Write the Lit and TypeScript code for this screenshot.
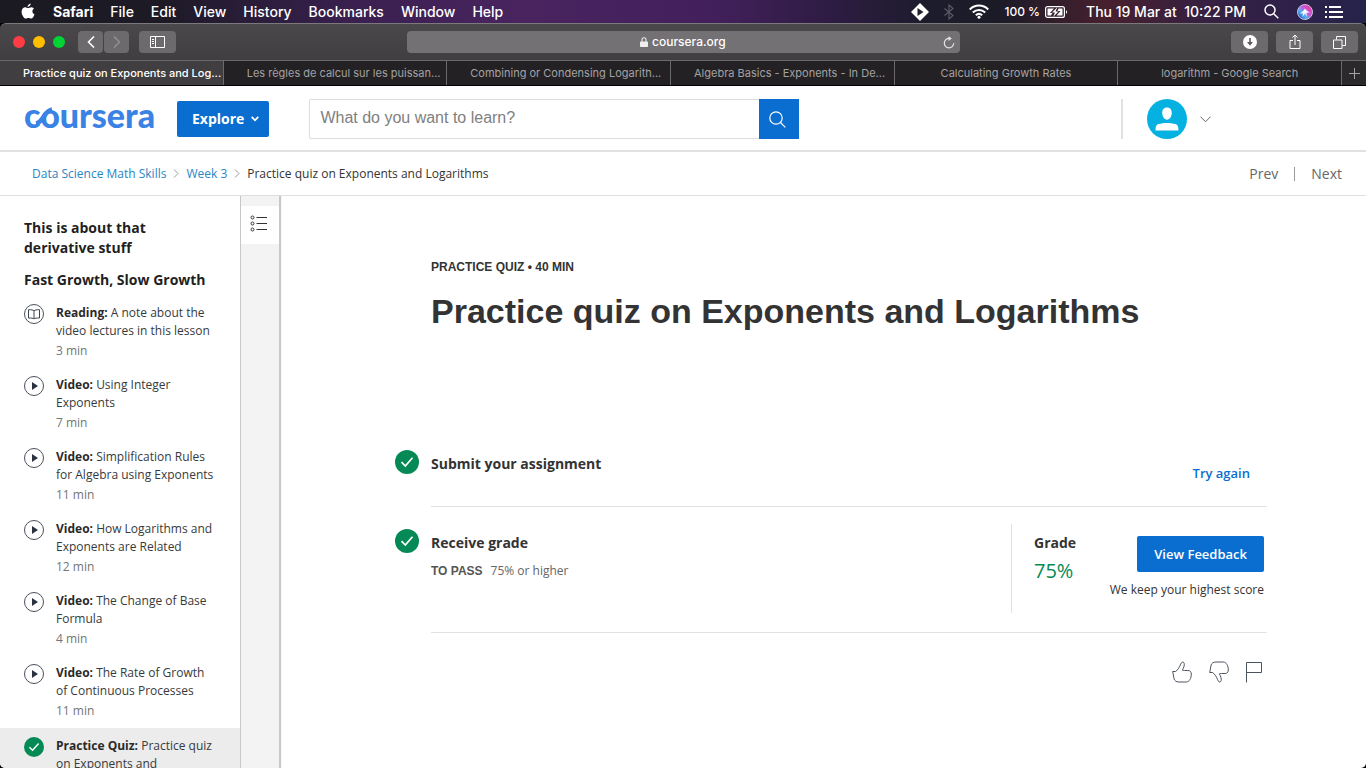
import { LitElement, html, css, svg } from "lit";
import { customElement, property } from "lit/decorators.js";
import { classMap } from "lit/directives/class-map.js";

type Kind = "reading" | "video" | "done";

interface Lesson {
  kind: Kind;
  type: string;
  title: string;
  time: string;
}

const MENUS = ["File", "Edit", "View", "History", "Bookmarks", "Window", "Help"];

const TABS = [
  { title: "Practice quiz on Exponents and Log...", clipped: true, active: true },
  { title: "Les règles de calcul sur les puissan...", clipped: true },
  { title: "Combining or Condensing Logarith...", clipped: true },
  { title: "Algebra Basics - Exponents - In De...", clipped: true },
  { title: "Calculating Growth Rates" },
  { title: "logarithm - Google Search" },
];

const LESSONS: Lesson[] = [
  { kind: "reading", type: "Reading:", title: "A note about the video lectures in this lesson", time: "3 min" },
  { kind: "video", type: "Video:", title: "Using Integer Exponents", time: "7 min" },
  { kind: "video", type: "Video:", title: "Simplification Rules for Algebra using Exponents", time: "11 min" },
  { kind: "video", type: "Video:", title: "How Logarithms and Exponents are Related", time: "12 min" },
  { kind: "video", type: "Video:", title: "The Change of Base Formula", time: "4 min" },
  { kind: "video", type: "Video:", title: "The Rate of Growth of Continuous Processes", time: "11 min" },
  { kind: "done", type: "Practice Quiz:", title: "Practice quiz on Exponents and", time: "" },
];

const checkIcon = (size: number) => html`<svg width=${size} height=${size} viewBox="0 0 24 24" aria-hidden="true">
  <circle cx="12" cy="12" r="12" fill="#058a56" />
  <path d="M6.500 12.200 10.300 16 17.500 7.800" fill="none" stroke="#fff" stroke-width="1.700" />
</svg>`;

const lessonIcon = (kind: Kind) => {
  if (kind === "done") return checkIcon(20);
  const inner =
    kind === "video"
      ? svg`<path d="M8 6v8l6-4z" fill="#2b3340" />`
      : svg`<path d="M10 6.800C9 5.900 7.500 5.700 4.500 5.700v8.300c3 0 4.500.1 5.500.9 1-.8 2.500-.9 5.500-.9V5.700c-3 0-4.500.2-5.500 1.100zV14.600" fill="none" stroke="#3d4450" />`;
  return html`<svg width="20" height="20" viewBox="0 0 20 20" aria-hidden="true">
    <circle cx="10" cy="10" r="9.500" fill="#fff" stroke="#4a505c" />${inner}
  </svg>`;
};

@customElement("lesson-link")
export class LessonLink extends LitElement {
  @property({ attribute: false }) lesson!: Lesson;

  static styles = css`
    :host { display: block; }
    .link { display: flex; gap: 12px; padding: 8px 24px; color: #373a3c; text-decoration: none;
      font: 12px/18px "Open Sans", sans-serif; }
    .link svg { flex: none; display: block; }
    .current { padding-top: 9px; background: #ececec; }
    .text { display: flex; flex-direction: column; gap: 2px; }
    .type { font-weight: 700; color: #2a2a2a; }
    .time { color: #757575; }
  `;

  render() {
    const { kind, type, title, time } = this.lesson;
    return html`<a href="#" class=${classMap({ link: true, current: kind === "done" })}>
      ${lessonIcon(kind)}
      <span class="text">
        <span><span class="type">${type}</span> ${title}</span>
        <span class="time">${time}</span>
      </span>
    </a>`;
  }
}

@customElement("mac-menubar")
export class MacMenubar extends LitElement {
  static styles = css`
    :host { display: flex; flex: none; align-items: center; justify-content: space-between; height: 23px;
      padding: 0 23px 0 20px; color: #fff; font: 500 14px/20px Inter, sans-serif;
      background: linear-gradient(90deg, #1b1a21 0%, #1d1a26 12%, #3a2050 26%, #49245f 38%, #43205c 52%, #301c45 60%, #1c1c2c 68%, #1b1b28 73%, #47202d 81%, #39203f 87%, #2f2149 94%, #25234a 100%); }
    .menus, .status, .icons, .corner { display: flex; align-items: center; }
    .menus { gap: 17px; }
    .status { gap: 18px; }
    .icons { gap: 15px; }
    .corner { gap: 12px; }
    .menu { all: unset; cursor: default; }
    .app { font-weight: 700; }
    .battery { display: flex; align-items: center; gap: 5px; font-size: 12px; }
    .clock { white-space: pre; }
    svg { display: block; }
  `;

  render() {
    return html`
      <nav class="menus" aria-label="Menus">
        <svg width="16" height="17" viewBox="0 0 16 17" fill="#fff">
          <path d="M10.700 0.500c.1 1.700-1.500 3.500-3.100 3.400C7.500 2.200 9 .7 10.700.5zM14 5.600c-2.400 1.500-1.900 4.800.5 5.800-.6 1.700-1.900 4.100-3.300 4.100-1 0-1.400-.6-2.700-.6s-1.700.6-2.600.6C4 15.600 1.600 12 1.600 8.700c0-2.800 1.800-4.400 3.600-4.400 1.300 0 2.200.8 3.100.8.800 0 1.800-.9 3.400-.8 1 .1 1.800.5 2.300 1.300z" />
        </svg>
        <button class="menu app">Safari</button>
        ${MENUS.map((m) => html`<button class="menu">${m}</button>`)}
      </nav>
      <div class="status">
        <div class="icons">
          <svg width="18" height="18" viewBox="0 0 18 18"><path d="M9 0l9 9-9 9-9-9z" fill="#fff" /><path d="M6.500 5v8l6-4z" fill="#231f2b" /></svg>
          <svg width="10" height="16" viewBox="0 0 10 16" fill="none" stroke="#5b5a66" stroke-width="1.200"><path d="M.5 4.500l8.500 7L5 15V1l4 3.500-8.500 7" /></svg>
          <svg width="20" height="15" viewBox="0 0 20 15" fill="none" stroke="#fff" stroke-width="2"><path d="M.8 5.500c5.200-5.200 13.200-5.200 18.400 0M3.800 8.500c3.600-3.500 8.800-3.500 12.400 0M6.800 11.300c2-1.800 4.400-1.800 6.400 0" /><circle cx="10" cy="13.300" r="1.500" fill="#fff" stroke="none" /></svg>
          <span class="battery">100 %
            <svg width="23" height="12" viewBox="0 0 23 12"><rect x=".6" y=".6" width="18.800" height="10.800" rx="2" fill="none" stroke="#fff" stroke-width="1.200" /><path d="M2.500 2.500H9L5 7h2.500L6 9.500H2.500zM13.500 2.500h4v7h-6L15.500 5H12.500z" fill="#fff" /><path d="M12.500 1L7 6.500h3L8 11l5.500-5.500h-3z" fill="#fff" /><path d="M21 4.300v3.400c1.500-.5 1.500-2.900 0-3.400z" fill="#fff" /></svg>
          </span>
        </div>
        <span class="clock">Thu 19 Mar at  10:22 PM</span>
        <svg width="15" height="15" viewBox="0 0 15 15" fill="none" stroke="#fff" stroke-width="1.500"><circle cx="6" cy="6" r="5" /><path d="M9.700 9.700 14.300 14.300" /></svg>
        <div class="corner">
          <svg width="16" height="16" viewBox="0 0 16 16">
            <defs><linearGradient id="orb" x1="0.1" y1="0.9" x2="0.9" y2="0.2"><stop offset="0" stop-color="#1d48d8" /><stop offset=".35" stop-color="#4fb4ee" /><stop offset=".6" stop-color="#c05be0" /><stop offset="1" stop-color="#e93a9c" /></linearGradient></defs>
            <circle cx="8" cy="8" r="7.500" fill="url(#orb)" stroke="#c9c4dd" />
            <path d="M2.500 9.500C5 8.500 6.500 6.500 8 4.500c1.500 2 3 3.500 5.500 4L9.500 8.800 10 13 8 9.500 5.500 13l.5-3.800z" fill="#f4f4ff" />
          </svg>
          <svg width="18" height="12" viewBox="0 0 18 12" fill="#fff"><path d="M0 0h2v2H0zM4 0h12v2H4zM0 5h2v2H0zM4 5h14v2H4zM0 10h2v2H0zM4 10h14v2H4z" /></svg>
        </div>
      </div>`;
  }
}

@customElement("safari-chrome")
export class SafariChrome extends LitElement {
  static styles = css`
    :host { display: block; flex: none; font-family: Inter, sans-serif; border-top: 1px solid #7b797b;
      border-bottom: 1px solid #000; border-radius: 6px 6px 0 0; background: linear-gradient(#4a484a, #403e40 36px); overflow: hidden; }
    .bar { display: grid; grid-template-columns: 1fr minmax(0, 553px) 1fr; align-items: center; height: 36px; padding: 0 8px; }
    .side { display: flex; align-items: center; }
    .right { justify-content: flex-end; gap: 8px; }
    .lights { display: flex; gap: 8px; margin: 0 13px 0 5px; }
    .light { width: 12px; height: 12px; border-radius: 50%; background: #ff3b43; }
    .min { background: #ffbe00; }
    .max { background: #00d435; }
    .btn { display: grid; place-items: center; width: 37px; height: 22px; padding: 0; border: 0; border-radius: 4px;
      background: #6c6a6c; color: #fff; }
    .nav { width: 25px; margin-right: 1px; }
    .off { color: #969496; }
    .panel { margin-left: 9px; }
    .address { display: flex; align-items: center; height: 22px; padding: 0 5px 0 17px; border-radius: 4px; background: #737173; }
    .site { flex: 1; display: flex; align-items: center; justify-content: center; gap: 4px; }
    .url { width: 74px; padding: 0; border: 0; background: none; color: #fff; font: 500 12px/16px Inter, sans-serif; }
    .reload { all: unset; color: #e5e5e5; }
    .tabs { display: grid; grid-template-columns: repeat(6, minmax(0, 1fr)) 24px; height: 24px; border-top: 1px solid #6b696b; }
    .tab { all: unset; box-sizing: border-box; display: flex; align-items: center; justify-content: center; height: 24px;
      border-right: 1px solid #6b696b; background: #232123; color: #a3a1a3; font-size: 11px; line-height: 16px; white-space: nowrap; overflow: hidden; }
    .clipped { justify-content: flex-start; padding-left: 23px; }
    .active { background: none; color: #fff; font-weight: 500; }
    .add { all: unset; display: grid; place-items: center; background: #2b292b; color: #a3a1a3; }
    svg { display: block; }
  `;

  render() {
    return html`
      <div class="bar">
        <div class="side">
          <div class="lights"><span class="light"></span><span class="light min"></span><span class="light max"></span></div>
          <button class="btn nav" aria-label="Back"><svg width="8" height="12" viewBox="0 0 8 12" fill="none" stroke="currentColor" stroke-width="1.600"><path d="M7 .5 1.500 6 7 11.500" /></svg></button>
          <button class="btn nav off" aria-label="Forward"><svg width="8" height="12" viewBox="0 0 8 12" fill="none" stroke="currentColor" stroke-width="1.300"><path d="M1 .5 6.500 6 1 11.500" /></svg></button>
          <button class="btn panel" aria-label="Sidebar"><svg width="15" height="12" viewBox="0 0 15 12" fill="none" stroke="currentColor"><path d="M.5.5h14v11H.5zM5.500.5v11M2 3.500h2M2 5.500h2M2 7.500h2" /></svg></button>
        </div>
        <div class="address">
          <div class="site">
            <svg width="8" height="10" viewBox="0 0 8 10"><path d="M2 5V2.800a2 2 0 0 1 4 0V5" fill="none" stroke="#eee" stroke-width="1.100" /><rect y="4.500" width="8" height="5.500" rx=".8" fill="#eee" /></svg>
            <input class="url" aria-label="Address" value="coursera.org" />
          </div>
          <button class="reload" aria-label="Reload"><svg width="12" height="13" viewBox="0 0 12 13" fill="none" stroke="currentColor" stroke-width="1.200"><path d="M6.500 2.500A4.700 4.700 0 1 0 10.700 7.200" /><path d="M5.500.2 8.800 2.600 5.500 5z" fill="currentColor" stroke="none" /></svg></button>
        </div>
        <div class="side right">
          <button class="btn" aria-label="Downloads"><svg width="14" height="14" viewBox="0 0 14 14"><circle cx="7" cy="7" r="7" fill="#fff" /><path d="M6.200 3h1.600v4h2.200L7 10.800 4 7h2.200z" fill="#5c5a5c" /></svg></button>
          <button class="btn" aria-label="Share"><svg width="12" height="16" viewBox="0 0 12 16" fill="none" stroke="currentColor"><path d="M4 6.500H1v8h10v-8H8M6 11V1M3.500 3.500 6 1l2.500 2.500" /></svg></button>
          <button class="btn" aria-label="Show tabs"><svg width="13" height="13" viewBox="0 0 13 13" fill="none" stroke="currentColor"><path d="M.5 4h8.500v8.500H.5zM3.500 3.500V.5h9v9H9.500" /></svg></button>
        </div>
      </div>
      <div class="tabs">
        ${TABS.map((t) => html`<button class=${classMap({ tab: true, clipped: !!t.clipped, active: !!t.active })}>${t.title}</button>`)}
        <button class="add" aria-label="New tab"><svg width="11" height="11" viewBox="0 0 11 11" stroke="currentColor"><path d="M5.500 0v11M0 5.500h11" /></svg></button>
      </div>`;
  }
}

@customElement("app-root")
export class AppRoot extends LitElement {
  static styles = css`
    :host { display: flex; flex-direction: column; height: 100vh; overflow: hidden; background: #000; color: #333;
      font-family: "Open Sans", sans-serif; }
    * { box-sizing: border-box; }
    svg { display: block; flex: none; }
    a { text-decoration: none; color: inherit; }
    .page { flex: 1; min-height: 0; display: flex; flex-direction: column; background: #fff; border-radius: 0 0 5px 5px; overflow: hidden; }

    .header { flex: none; display: flex; align-items: center; height: 66px; padding: 2px 155px 0 24px; border-bottom: 2px solid #e1e1e1; }
    .logo { position: relative; width: 129px; margin-right: 24px; padding-bottom: 8px; color: #3a82e4; font: 900 34px/32px Lato, sans-serif; }
    .loop { position: absolute; left: 0; top: 0; }
    .explore { display: flex; align-items: center; gap: 7px; height: 36px; padding: 0 10px 0 15px; border: 0; border-radius: 2px;
      background: #0a6ed1; color: #fff; font: 700 14px/20px "Open Sans", sans-serif; margin-right: 40px; }
    .search { display: flex; flex: 0 1 490px; height: 40px; }
    .query { flex: 1; min-width: 0; padding: 0 10px 2px; border: 1px solid #dedede; border-right: 0; border-radius: 2px 0 0 2px;
      color: #333; font: 16px/20px "Liberation Sans", sans-serif; }
    .query::placeholder { color: #808080; opacity: 1; }
    .go { display: grid; place-items: center; width: 40px; padding: 0 4px 0 0; border: 0; background: #0a6ed1; }
    .account { display: flex; align-items: center; gap: 13px; height: 40px; margin-left: auto; padding: 0 0 0 24px;
      border: 0; border-left: 2px solid #e1e1e1; background: none; }

    .crumbs { flex: none; display: flex; align-items: center; justify-content: space-between; height: 44px; padding: 0 24px 0 32px;
      border-bottom: 1px solid #e1e1e1; font-size: 12px; line-height: 18px; }
    .trail, .pager { display: flex; align-items: center; }
    .trail { gap: 7px; }
    .trail a { color: #2a85c4; }
    .pager { gap: 16px; font-size: 14px; color: #666; }
    .pager a + a { display: flex; align-items: center; gap: 16px; }
    .pager a + a::before { content: ""; width: 1px; height: 14px; background: #999; }

    .body { flex: 1; min-height: 0; display: flex; }
    .lessons { flex: none; width: 240px; overflow: hidden; padding-top: 22px; }
    .lessons h2 { margin: 0 24px 12px; font-size: 14px; line-height: 20px; color: #1f1f1f; }
    .lessons h2 + h2 { margin-bottom: 6px; }
    .rail { flex: none; width: 39px; padding: 10px 0 0; border-left: 1px solid #c7c7c7; background: #f3f3f3;
      box-shadow: 2px 0 1px #c8c8c8; }
    .outline { display: grid; place-items: center; width: 100%; height: 38px; padding: 0 2px 2px 0; border: 0; background: #fff; }

    .main { flex: 1; min-width: 0; padding: 62px 99px 0 116px; }
    .intro { padding-left: 36px; font-family: "Liberation Sans", sans-serif; color: #333; }
    .kind { margin: 0 0 15px; font-size: 12px; line-height: 18px; font-weight: 700; }
    .intro h1 { margin: 0; font-size: 34px; line-height: 40px; }
    .steps { margin-top: 105px; }
    .step { display: flex; gap: 12px; }
    .step > svg { margin-top: 14px; }
    .step + .step { padding-top: 8px; }
    .row { flex: 1; display: flex; justify-content: space-between; min-height: 71px; border-bottom: 1px solid #e1e1e1; }
    .row h3 { margin: 0; font-size: 14px; line-height: 20px; }
    .about { padding-top: 18px; }
    .again { align-self: center; margin-right: 17px; padding-top: 4px; color: #0a6ed1; font-size: 13px; line-height: 20px; font-weight: 600; }
    .pass { display: flex; gap: 8px; margin: 9px 0 0; font-size: 12px; line-height: 18px; color: #666; }
    .pass b { font-family: "Liberation Sans", sans-serif; color: #555; }
    .result { display: flex; justify-content: space-between; width: 256px; margin: 9px 0 19px; padding: 0 3px 0 22px; border-left: 1px solid #e1e1e1; }
    .grade { padding-top: 9px; }
    .score { margin: 4px 0 0; font-size: 20px; line-height: 28px; color: #058a56; }
    .feedback { display: flex; flex-direction: column; align-items: flex-end; gap: 9px; padding: 12px 0 14px; font-size: 12px; line-height: 18px; }
    .view { height: 36px; padding: 0 17px; border: 0; border-radius: 2px; background: #0a6ed1; color: #fff;
      font: 600 13px/20px "Open Sans", sans-serif; }
    .rate { display: flex; justify-content: flex-end; gap: 17px; padding: 28px 5px 0 0; }
    .rate button { padding: 0; border: 0; background: none; }
  `;

  render() {
    return html`
      <mac-menubar></mac-menubar>
      <safari-chrome></safari-chrome>
      <div class="page">
        <header class="header">
          <a class="logo" href="#">coursera<svg class="loop" width="40" height="32" viewBox="0 0 40 32" fill="none" stroke="#3a82e4" stroke-width="4.600"><path d="M12 24.500C19 23.500 20 12 28 10.500" /></svg></a>
          <button class="explore">Explore <svg width="8" height="6" viewBox="0 0 8 6" fill="none" stroke="#fff" stroke-width="1.800"><path d="M.7.8 4 4.300 7.300.8" /></svg></button>
          <form class="search" role="search">
            <input class="query" type="text" aria-label="Search" placeholder="What do you want to learn?" />
            <button class="go" type="button" aria-label="Search"><svg width="17" height="17" viewBox="0 0 17 17" fill="none" stroke="#fff" stroke-width="1.200"><circle cx="7" cy="7" r="6.200" /><path d="M11.500 11.500 16.300 16.300" /></svg></button>
          </form>
          <button class="account" aria-label="Account">
            <svg width="40" height="40" viewBox="0 0 40 40"><circle cx="20" cy="20" r="20" fill="#04b1e0" /><path d="M20 8.500c3.200 0 4.800 2.200 4.800 5.300 0 3.600-2 6.900-4.800 6.900s-4.800-3.300-4.800-6.900c0-3.100 1.600-5.300 4.800-5.300z" fill="#fff" /><path d="M8.500 31.500c0-4 .8-5.600 3.200-6.400 4.800-1.600 11.800-1.600 16.600 0 2.400.8 3.200 2.400 3.200 6.400z" fill="#fff" /></svg>
            <svg width="11" height="7" viewBox="0 0 11 7" fill="none" stroke="#666"><path d="M.5.700 5.500 5.800 10.500.7" /></svg>
          </button>
        </header>
        <nav class="crumbs" aria-label="Breadcrumb">
          <div class="trail">
            <a href="#">Data Science Math Skills</a>${this.chevron()}<a href="#">Week 3</a>${this.chevron()}<span>Practice quiz on Exponents and Logarithms</span>
          </div>
          <div class="pager"><a href="#">Prev</a><a href="#">Next</a></div>
        </nav>
        <div class="body">
          <aside class="lessons">
            <h2>This is about that derivative stuff</h2>
            <h2>Fast Growth, Slow Growth</h2>
            ${LESSONS.map((l) => html`<lesson-link .lesson=${l}></lesson-link>`)}
          </aside>
          <div class="rail">
            <button class="outline" aria-label="Outline"><svg width="18" height="18" viewBox="0 0 18 18" fill="none" stroke="#333"><circle cx="2.500" cy="2.500" r="1.500" /><circle cx="2.500" cy="8.500" r="1.500" /><circle cx="2.500" cy="14.500" r="1.500" /><path d="M6.500 2.500H17M6.500 8.500H17M6.500 14.500H17" /></svg></button>
          </div>
          <main class="main">
            <div class="intro">
              <p class="kind">PRACTICE QUIZ • 40 MIN</p>
              <h1>Practice quiz on Exponents and Logarithms</h1>
            </div>
            <div class="steps">
              <section class="step">
                ${checkIcon(24)}
                <div class="row">
                  <div class="about"><h3>Submit your assignment</h3></div>
                  <a class="again" href="#">Try again</a>
                </div>
              </section>
              <section class="step">
                ${checkIcon(24)}
                <div class="row">
                  <div class="about">
                    <h3>Receive grade</h3>
                    <p class="pass"><b>TO PASS</b> 75% or higher</p>
                  </div>
                  <div class="result">
                    <div class="grade"><h3>Grade</h3><p class="score">75%</p></div>
                    <div class="feedback"><button class="view">View Feedback</button><span>We keep your highest score</span></div>
                  </div>
                </div>
              </section>
              <div class="rate">
                <button aria-label="Like"><svg width="20" height="22" viewBox="0 0 20 22" fill="none" stroke="#4d535e"><path d="M.7 10.500h2.800c2.500-1.500 4-4.500 5.200-7.300C9.500 1.300 10.300.8 11 1c1.400.5 1.500 2.300 1 4.300-.3 1.500-1 2.700-1.600 3.900.7.300 1.200.3 2 .3h3.500c2.400 0 3.400 1.500 3.400 3.500 0 4.500-2 7.800-5 8H7c-2.500 0-4.500-1-5-3.500z" /></svg></button>
                <button aria-label="Dislike"><svg width="20" height="22" viewBox="0 0 20 22" fill="none" stroke="#4d535e"><path d="M.7 11.500h2.800c2.500 1.500 4 4.500 5.200 7.300.8 1.900 1.600 2.400 2.300 2.200 1.400-.5 1.500-2.300 1-4.300-.3-1.500-1-2.700-1.600-3.900.7-.3 1.200-.3 2-.3h3.500c2.400 0 3.400-1.500 3.400-3.500 0-4.500-2-7.800-5-8H7C4.500 1 2.500 2 2 4.500z" /></svg></button>
                <button aria-label="Report"><svg width="16" height="22" viewBox="0 0 16 22" fill="none" stroke="#4d535e"><path d="M.5 21.500V1.500h15v10H.5" /></svg></button>
              </div>
            </div>
          </main>
        </div>
      </div>`;
  }

  private chevron() {
    return html`<svg width="6" height="9" viewBox="0 0 6 9" fill="none" stroke="#999" aria-hidden="true"><path d="M1 .5 5 4.500 1 8.500" /></svg>`;
  }
}
